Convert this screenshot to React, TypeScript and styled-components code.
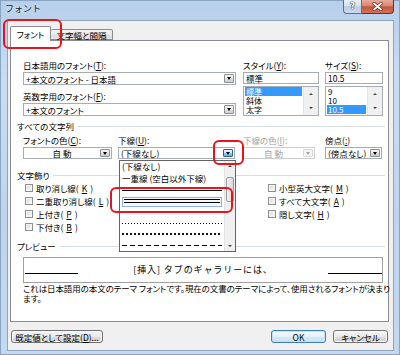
import React from 'react';
import styled, { createGlobalStyle } from 'styled-components';

const GlobalStyle = createGlobalStyle`
  html, body { margin: 0; padding: 0; width: 400px; height: 355px; overflow: hidden; background: #fff; }
  body {
    font-family: "Noto Sans CJK JP", "Noto Sans", sans-serif;
    font-size: 8.5px;
    color: #000;
    font-feature-settings: "palt";
  }
  #root { width: 400px; height: 355px; }
  u { text-decoration-thickness: 1px; text-underline-offset: 1px; }
`;

const Window = styled.div`
  box-sizing: border-box;
  width: 400px;
  height: 355px;
  display: flex;
  flex-direction: column;
  padding: 0 6px 4px 7px;
  background: linear-gradient(180deg, #b6cfeb 0%, #c9dcf2 22%, #bfd4ec 60%, #c4d8ee 100%);
  box-shadow: inset 0 0 0 1px #8aa5c4;
`;

const TitleBar = styled.div`
  height: 20px;
  flex: none;
  display: flex;
  align-items: flex-start;
`;

const Title = styled.div`
  margin: 3px 0 0 -2px;
  font-size: 9px;
  line-height: 12px;
  color: #1b1b1b;
  font-feature-settings: normal;
  text-shadow: 0 0 5px rgba(255, 255, 255, 0.9);
`;

const CaptionButtons = styled.div`
  margin-left: auto;
  display: flex;
`;

const CaptionButton = styled.div<{ $variant: 'help' | 'close' }>`
  box-sizing: border-box;
  height: 14px;
  width: ${p => (p.$variant === 'close' ? 32 : 19)}px;
  display: flex;
  align-items: center;
  justify-content: center;
  border: 1px solid ${p => (p.$variant === 'close' ? '#6a3027' : '#5d6f87')};
  border-top: none;
  ${p => (p.$variant === 'close' ? 'border-left: none;' : '')}
  border-radius: ${p => (p.$variant === 'close' ? '0 0 4px 0' : '0 0 0 4px')};
  background: ${p =>
    p.$variant === 'close'
      ? 'linear-gradient(180deg, #e9a99a 0%, #d98872 45%, #c5553d 52%, #d2735a 100%)'
      : 'linear-gradient(180deg, #e9f0f8 0%, #d4e1ef 45%, #b9cce2 52%, #cddced 100%)'};
  color: #fff;
  font-family: "DejaVu Sans", sans-serif;
  font-weight: bold;
  font-size: 9px;
  line-height: 9px;
  text-shadow: 0 0 1px #2c3e55, 0 0 1px #2c3e55, 0 0 1px #2c3e55;
`;

const Client = styled.div`
  flex: 1;
  box-sizing: border-box;
  background: #f0f0f0;
  border: 1px solid #8fa4bd;
  padding: 5px 4px 7px 2px;
  display: flex;
  flex-direction: column;
`;

const TabStrip = styled.div`
  display: flex;
  align-items: flex-end;
  height: 15px;
  margin-bottom: -1px;
  position: relative;
  z-index: 2;
  flex: none;
`;

const Tab = styled.div<{ $active?: boolean; $w: number }>`
  position: relative;
  box-sizing: border-box;
  width: ${p => p.$w}px;
  height: ${p => (p.$active ? 15 : 11)}px;
  margin-bottom: ${p => (p.$active ? 0 : 1)}px;
  border: 1px solid #898c95;
  border-bottom: ${p => (p.$active ? 'none' : '1px solid #898c95')};
  ${p => (p.$active ? '' : 'border-left: none;')}
  border-radius: 2px 2px 0 0;
  background: ${p => (p.$active ? '#fff' : 'linear-gradient(180deg, #f3f3f3 0%, #ebebeb 50%, #dddddd 51%, #e6e6e6 100%)')};
  display: flex;
  align-items: center;
  justify-content: center;
  white-space: nowrap;
  line-height: 10px;
`;

const Ring = styled.div<{ $l: number; $t: number; $w: number; $h: number }>`
  position: absolute;
  left: ${p => p.$l}px;
  top: ${p => p.$t}px;
  width: ${p => p.$w}px;
  height: ${p => p.$h}px;
  box-sizing: border-box;
  border: 2.5px solid #e8141c;
  border-radius: 6px;
  pointer-events: none;
  z-index: 10;
`;

const Panel = styled.div`
  box-sizing: border-box;
  height: 282px;
  flex: none;
  background: #fff;
  border: 1px solid #898c95;
  padding: 19px 5px 0 6px;
  display: flex;
  flex-direction: column;
`;

const FontRow = styled.div`
  display: flex;
  margin-left: 6px;
`;

const Field = styled.div<{ $w: number; $gap?: number }>`
  width: ${p => p.$w}px;
  margin-right: ${p => p.$gap ?? 0}px;
  display: flex;
  flex-direction: column;
  flex: none;
`;

const Label = styled.div<{ $disabled?: boolean; $mt?: number }>`
  height: 10px;
  line-height: 10px;
  margin-top: ${p => p.$mt ?? 0}px;
  margin-bottom: 2px;
  white-space: nowrap;
  color: ${p => (p.$disabled ? '#a3a3a3' : '#000')};
`;

const ComboFrame = styled.div<{ $w: number; $h: number; $disabled?: boolean }>`
  position: relative;
  box-sizing: border-box;
  width: ${p => p.$w}px;
  height: ${p => p.$h}px;
  border: 1px solid ${p => (p.$disabled ? '#cdcdcd' : '#a5acb5')};
  background: #fff;
  display: flex;
  align-items: stretch;
`;

const ComboText = styled.div<{ $center?: boolean; $disabled?: boolean }>`
  flex: 1;
  padding-left: 2px;
  display: flex;
  align-items: center;
  justify-content: ${p => (p.$center ? 'center' : 'flex-start')};
  letter-spacing: ${p => (p.$center ? '2px' : '0')};
  white-space: nowrap;
  overflow: hidden;
  color: ${p => (p.$disabled ? '#a3a3a3' : '#000')};
`;

const DropButton = styled.div<{ $state: 'normal' | 'pressed' | 'disabled' }>`
  position: relative;
  box-sizing: border-box;
  width: 10px;
  margin: 1px 1px 1px 0;
  display: flex;
  align-items: center;
  justify-content: center;
  border: 1px solid
    ${p => (p.$state === 'pressed' ? '#2c628b' : p.$state === 'disabled' ? '#d8d8d8' : '#8e8f8f')};
  border-radius: 1px;
  background: ${p =>
    p.$state === 'pressed'
      ? 'linear-gradient(180deg, #e5f4fc 0%, #c4e5f6 50%, #98d1ef 51%, #68b3db 100%)'
      : p.$state === 'disabled'
      ? '#f4f4f4'
      : 'linear-gradient(180deg, #f2f2f2 0%, #ebebeb 50%, #dddddd 51%, #cfcfcf 100%)'};
`;

const Arrow = styled.span<{ $dir: 'up' | 'down'; $color?: string; $size?: number }>`
  width: 0;
  height: 0;
  border-left: ${p => p.$size ?? 2.5}px solid transparent;
  border-right: ${p => p.$size ?? 2.5}px solid transparent;
  ${p => (p.$dir === 'down' ? 'border-top' : 'border-bottom')}: ${p => (p.$size ?? 2.5) * 1.2}px solid
    ${p => p.$color ?? '#000'};
`;

const TextBox = styled.div`
  box-sizing: border-box;
  height: 12px;
  border: 1px solid #a5acb5;
  background: #fff;
  padding-left: 2px;
  line-height: 10px;
  white-space: nowrap;
`;

const ListBox = styled.div`
  margin-top: 2px;
  box-sizing: border-box;
  height: 30px;
  border: 1px solid #a5acb5;
  background: #fff;
  display: flex;
`;

const ListItems = styled.div`
  flex: 1;
  padding: 0 1px;
  display: flex;
  flex-direction: column;
`;

const ListItem = styled.div<{ $selected?: boolean }>`
  height: 9px;
  line-height: 9px;
  font-size: 8px;
  padding-left: 1px;
  white-space: nowrap;
  background: ${p => (p.$selected ? '#3399ff' : 'transparent')};
  color: ${p => (p.$selected ? '#fff' : '#000')};
`;

const ScrollBar = styled.div<{ $w: number }>`
  width: ${p => p.$w}px;
  flex: none;
  display: flex;
  flex-direction: column;
  background: #f0f0f0;
  border-left: 1px solid #e3e3e3;
`;

const ScrollBtn = styled.div<{ $h?: number }>`
  ${p => (p.$h ? `height: ${p.$h}px;` : 'flex: 1;')}
  flex-shrink: 0;
  display: flex;
  align-items: center;
  justify-content: center;
`;

const ScrollTrack = styled.div`
  flex: 1;
  display: flex;
  flex-direction: column;
`;

const Thumb = styled.div`
  margin: 6px 1px 0;
  height: 25px;
  box-sizing: border-box;
  border: 1px solid #9a9a9a;
  border-radius: 2px;
  background: linear-gradient(90deg, #f4f4f4 0%, #e6e6e6 50%, #d6d6d6 100%);
`;

const GroupHeader = styled.div<{ $mt: number }>`
  display: flex;
  align-items: center;
  gap: 3px;
  height: 10px;
  line-height: 10px;
  margin: ${p => p.$mt}px -2px 0 0;
  white-space: nowrap;
  &::after {
    content: '';
    flex: 1;
    height: 1px;
    background: #d5dfe5;
  }
`;

const AttrRow = styled.div`
  display: grid;
  grid-template-columns: 95px 125px 82px 58px;
  margin: 4px 0 0 6px;
`;

const DropList = styled.div`
  position: absolute;
  left: 0;
  top: calc(100% + 2px);
  width: 117px;
  height: 92px;
  box-sizing: border-box;
  border: 1px solid #646464;
  background: #fff;
  display: flex;
  z-index: 5;
`;

const DropItems = styled.div`
  flex: 1;
  display: flex;
  flex-direction: column;
`;

const DropItem = styled.div<{ $h: number }>`
  position: relative;
  height: ${p => p.$h}px;
  flex: none;
  display: flex;
  align-items: center;
  padding-left: 2px;
  white-space: nowrap;
`;

const LineSample = styled.div<{ $kind: 'solid' | 'dot' | 'bolddot' | 'dash' }>`
  width: 100px;
  height: ${p => (p.$kind === 'bolddot' ? 2 : 1)}px;
  background: ${p =>
    p.$kind === 'solid'
      ? '#000'
      : p.$kind === 'dot'
      ? 'repeating-linear-gradient(90deg, #000 0 1px, transparent 1px 3px)'
      : p.$kind === 'bolddot'
      ? 'repeating-linear-gradient(90deg, #111 0 2px, transparent 2px 4px)'
      : 'repeating-linear-gradient(90deg, #000 0 5px, transparent 5px 8px)'};
`;

const FocusBox = styled.div`
  box-sizing: border-box;
  width: 100px;
  height: 10px;
  margin-top: 2px;
  align-self: flex-start;
  border: 1px solid #8db2e3;
  background: #f5f9fe;
  display: flex;
  flex-direction: column;
  gap: 2px;
  padding-top: 1px;
`;

const DoubleLine = styled.div`
  height: 1px;
  margin: 0 1px;
  background: #000;
`;

const EffectsGrid = styled.div`
  display: grid;
  grid-template-columns: 243px auto;
  grid-template-rows: repeat(4, 13px);
  grid-auto-flow: column;
  margin: 1px 0 0 8px;
`;

const CheckItem = styled.div`
  display: flex;
  align-items: center;
  gap: 3px;
  white-space: nowrap;
`;

const CheckBox = styled.span`
  box-sizing: border-box;
  width: 8px;
  height: 8px;
  border: 1px solid #8e8f8f;
  background: linear-gradient(135deg, #d4d4d4 0%, #eeeeee 60%, #fbfbfb 100%);
  box-shadow: inset 0 0 0 1px #f4f4f4;
`;

const PreviewBox = styled.div`
  margin: 6px 0 0 6px;
  height: 26px;
  box-sizing: border-box;
  border: 1px solid #a0a0a0;
  background: #fff;
  display: grid;
  grid-template-columns: 1fr auto 1fr;
  align-items: center;
`;

const PreviewRule = styled.div<{ $side: 'left' | 'right' }>`
  width: ${p => (p.$side === 'left' ? 53 : 54)}px;
  height: 1px;
  background: #000;
  justify-self: ${p => (p.$side === 'left' ? 'start' : 'end')};
  margin: 7px ${p => (p.$side === 'left' ? '0 0 1px' : '0 0 0')};
`;

const PreviewText = styled.div`
  font-size: 9px;
  letter-spacing: 0.9px;
  line-height: 12px;
  font-feature-settings: normal;
  white-space: nowrap;
`;

const Description = styled.div`
  margin-left: 6px;
  line-height: 10px;
  letter-spacing: -0.1px;
  white-space: nowrap;
`;

const ButtonBar = styled.div`
  margin-top: 8px;
  display: flex;
  gap: 7px;
  padding: 0 1px;
  flex: none;
`;

const PushButton = styled.div<{ $w: number; $default?: boolean; $pushLeft?: boolean }>`
  box-sizing: border-box;
  width: ${p => p.$w}px;
  height: 13px;
  ${p => (p.$pushLeft ? 'margin-right: auto;' : '')}
  border: 1px solid ${p => (p.$default ? '#3c7fb1' : '#707070')};
  border-radius: 3px;
  background: ${p =>
    p.$default
      ? 'linear-gradient(180deg, #f2f8fd 0%, #e6f2fb 50%, #d4e9f8 51%, #c9e2f5 100%)'
      : 'linear-gradient(180deg, #f2f2f2 0%, #ebebeb 50%, #dddddd 51%, #cfcfcf 100%)'};
  box-shadow: inset 0 0 0 1px ${p => (p.$default ? '#bfe3f7' : '#fbfbfb')};
  display: flex;
  align-items: center;
  justify-content: center;
  white-space: nowrap;
  line-height: 10px;
`;

type ComboProps = {
  w: number;
  h?: number;
  text: string;
  center?: boolean;
  state?: 'normal' | 'pressed' | 'disabled';
  buttonRing?: boolean;
  children?: React.ReactNode;
};

function ComboBox({ w, h = 12, text, center, state = 'normal', buttonRing, children }: ComboProps) {
  return (
    <ComboFrame $w={w} $h={h} $disabled={state === 'disabled'}>
      <ComboText $center={center} $disabled={state === 'disabled'}>
        {text}
      </ComboText>
      <DropButton $state={state}>
        <Arrow $dir="down" $color={state === 'disabled' ? '#a3a3a3' : '#000'} />
        {buttonRing && <Ring $l={-11} $t={-10} $w={31} $h={25} />}
      </DropButton>
      {children}
    </ComboFrame>
  );
}

function MiniScroll() {
  return (
    <ScrollBar $w={14}>
      <ScrollBtn>
        <Arrow $dir="up" $size={2} $color="#444" />
      </ScrollBtn>
      <ScrollBtn>
        <Arrow $dir="down" $size={2} $color="#444" />
      </ScrollBtn>
    </ScrollBar>
  );
}

function CloseGlyph() {
  return (
    <svg width="11" height="9" viewBox="0 0 11 9">
      <path d="M2 1.5 L9 7.5 M9 1.5 L2 7.5" stroke="#5a2a22" strokeWidth="3.2" strokeLinecap="round" />
      <path d="M2 1.5 L9 7.5 M9 1.5 L2 7.5" stroke="#fff" strokeWidth="1.8" strokeLinecap="round" />
    </svg>
  );
}

export default function App() {
  return (
    <>
      <GlobalStyle />
      <Window>
        <TitleBar>
          <Title>フォント</Title>
          <CaptionButtons>
            <CaptionButton $variant="help">?</CaptionButton>
            <CaptionButton $variant="close">
              <CloseGlyph />
            </CaptionButton>
          </CaptionButtons>
        </TitleBar>
        <Client>
          <TabStrip>
            <Tab $active $w={41}>
              フォント
              <Ring $l={-8} $t={-8} $w={59} $h={30} />
            </Tab>
            <Tab $w={62}>文字幅と間隔</Tab>
          </TabStrip>
          <Panel>
            <FontRow>
              <Field $w={213} $gap={7}>
                <Label>
                  日本語用のフォント(<u>T</u>):
                </Label>
                <ComboBox w={213} h={13} text="+本文のフォント - 日本語" />
                <Label $mt={6}>
                  英数字用のフォント(<u>F</u>):
                </Label>
                <ComboBox w={213} h={13} text="+本文のフォント" />
              </Field>
              <Field $w={76} $gap={6}>
                <Label>
                  スタイル(<u>Y</u>):
                </Label>
                <TextBox>標準</TextBox>
                <ListBox>
                  <ListItems>
                    <ListItem $selected>標準</ListItem>
                    <ListItem>斜体</ListItem>
                    <ListItem>太字</ListItem>
                  </ListItems>
                  <MiniScroll />
                </ListBox>
              </Field>
              <Field $w={58}>
                <Label>
                  サイズ(<u>S</u>):
                </Label>
                <TextBox>10.5</TextBox>
                <ListBox>
                  <ListItems>
                    <ListItem>9</ListItem>
                    <ListItem>10</ListItem>
                    <ListItem $selected>10.5</ListItem>
                  </ListItems>
                  <MiniScroll />
                </ListBox>
              </Field>
            </FontRow>

            <GroupHeader $mt={5}>すべての文字列</GroupHeader>
            <AttrRow>
              <Field $w={89}>
                <Label>
                  フォントの色(<u>C</u>):
                </Label>
                <ComboBox w={89} text="自動" center />
              </Field>
              <Field $w={117}>
                <Label>
                  下線(<u>U</u>):
                </Label>
                <ComboBox w={117} text="(下線なし)" state="pressed" buttonRing>
                  <DropList>
                    <DropItems>
                      <DropItem $h={9}>(下線なし)</DropItem>
                      <DropItem $h={15}>一重線 (空白以外下線)</DropItem>
                      <DropItem $h={10}>
                        <LineSample $kind="solid" />
                      </DropItem>
                      <DropItem $h={12}>
                        <FocusBox>
                          <DoubleLine />
                          <DoubleLine />
                        </FocusBox>
                        <Ring $l={-10} $t={-8} $w={123} $h={26} />
                      </DropItem>
                      <DropItem $h={10} />
                      <DropItem $h={12}>
                        <LineSample $kind="dot" />
                      </DropItem>
                      <DropItem $h={10}>
                        <LineSample $kind="bolddot" />
                      </DropItem>
                      <DropItem $h={12}>
                        <LineSample $kind="dash" />
                      </DropItem>
                    </DropItems>
                    <ScrollBar $w={10}>
                      <ScrollBtn $h={10}>
                        <Arrow $dir="up" $size={2} $color="#444" />
                      </ScrollBtn>
                      <ScrollTrack>
                        <Thumb />
                      </ScrollTrack>
                      <ScrollBtn $h={10}>
                        <Arrow $dir="down" $size={2} $color="#444" />
                      </ScrollBtn>
                    </ScrollBar>
                  </DropList>
                </ComboBox>
              </Field>
              <Field $w={72}>
                <Label $disabled>
                  下線の色(<u>I</u>):
                </Label>
                <ComboBox w={72} text="自動" center state="disabled" />
              </Field>
              <Field $w={57}>
                <Label>
                  傍点(<u>:</u>)
                </Label>
                <ComboBox w={57} text="(傍点なし)" />
              </Field>
            </AttrRow>

            <GroupHeader $mt={11}>文字飾り</GroupHeader>
            <EffectsGrid>
              <CheckItem>
                <CheckBox />
                取り消し線(<u>K</u>)
              </CheckItem>
              <CheckItem>
                <CheckBox />
                二重取り消し線(<u>L</u>)
              </CheckItem>
              <CheckItem>
                <CheckBox />
                上付き(<u>P</u>)
              </CheckItem>
              <CheckItem>
                <CheckBox />
                下付き(<u>B</u>)
              </CheckItem>
              <CheckItem>
                <CheckBox />
                小型英大文字(<u>M</u>)
              </CheckItem>
              <CheckItem>
                <CheckBox />
                すべて大文字(<u>A</u>)
              </CheckItem>
              <CheckItem>
                <CheckBox />
                隠し文字(<u>H</u>)
              </CheckItem>
            </EffectsGrid>

            <GroupHeader $mt={8}>プレビュー</GroupHeader>
            <PreviewBox>
              <PreviewRule $side="left" />
              <PreviewText>[挿入] タブのギャラリーには、</PreviewText>
              <PreviewRule $side="right" />
            </PreviewBox>
            <Description>
              これは日本語用の本文のテーマ フォントです。現在の文書のテーマによって、使用されるフォントが決まり
              <br />
              ます。
            </Description>
          </Panel>
          <ButtonBar>
            <PushButton $w={92} $pushLeft>
              既定値として設定(<u>D</u>)...
            </PushButton>
            <PushButton $w={55} $default>
              OK
            </PushButton>
            <PushButton $w={55}>キャンセル</PushButton>
          </ButtonBar>
        </Client>
      </Window>
    </>
  );
}
